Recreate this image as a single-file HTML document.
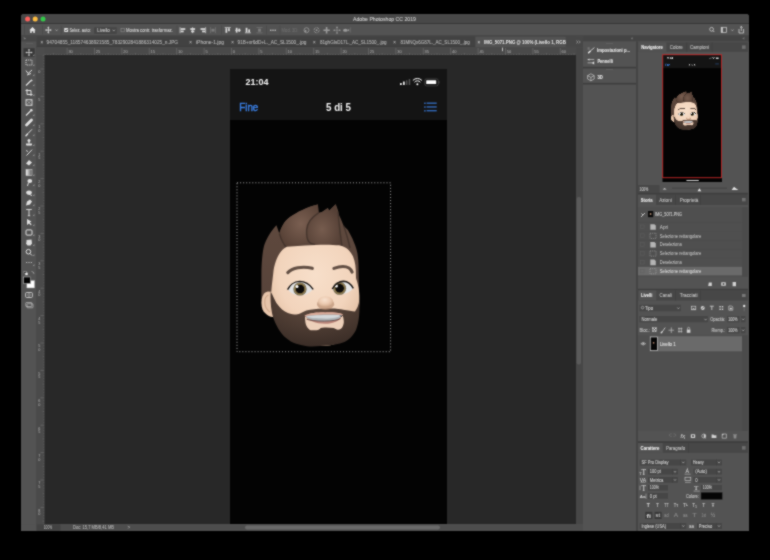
<!DOCTYPE html>
<html><head><meta charset="utf-8">
<style>
*{margin:0;padding:0}
html,body{width:770px;height:560px;background:#000;overflow:hidden}
svg{display:block;font-family:"Liberation Sans",sans-serif;will-change:transform}
</style></head><body>
<svg width="770" height="560" viewBox="0 0 770 560">
<defs><filter id="gblur" x="0" y="0" width="770" height="560" filterUnits="userSpaceOnUse" color-interpolation-filters="sRGB"><feConvolveMatrix order="3" kernelMatrix="1 2 1 2 10 2 1 2 1" divisor="22" edgeMode="duplicate"/></filter></defs>
<g filter="url(#gblur)">
<rect x="21.00" y="14.00" width="728.00" height="517.00" fill="#535353" rx="3"/>
<rect x="21.00" y="18.00" width="728.00" height="513.00" fill="#535353"/>
<path d="M21,23.5 L21,17 Q21,14 24,14 L746,14 Q749,14 749,17 L749,23.5 Z" fill="#484848"/>
<rect x="21.00" y="23.20" width="728.00" height="0.80" fill="#333"/>
<circle cx="27.6" cy="19" r="2.5" fill="#fc605c"/>
<circle cx="35.2" cy="19" r="2.5" fill="#fdbc40"/>
<circle cx="43" cy="19" r="2.5" fill="#34c84a"/>
<text x="353.00" y="20.90" font-size="5" fill="#d2d2d2" stroke="#d2d2d2" stroke-width="0.07" textLength="63.00" lengthAdjust="spacingAndGlyphs">Adobe Photoshop CC 2019</text>
<rect x="21.00" y="24.00" width="728.00" height="12.00" fill="#535353"/>
<rect x="21.00" y="35.60" width="728.00" height="0.60" fill="#3a3a3a"/>
<rect x="24.20" y="25.50" width="0.60" height="9.00" fill="#474747"/>
<rect x="42.40" y="25.50" width="0.60" height="9.00" fill="#474747"/>
<rect x="60.90" y="25.50" width="0.60" height="9.00" fill="#474747"/>
<rect x="176.70" y="25.50" width="0.60" height="9.00" fill="#474747"/>
<rect x="221.00" y="25.50" width="0.60" height="9.00" fill="#474747"/>
<rect x="266.00" y="25.50" width="0.60" height="9.00" fill="#474747"/>
<rect x="279.70" y="25.50" width="0.60" height="9.00" fill="#474747"/>
<path d="M29.3,30.2 L32.5,26.9 L35.7,30.2 L34.8,30.2 L34.8,33 L33.3,33 L33.3,31.3 L31.7,31.3 L31.7,33 L30.2,33 L30.2,30.2 Z" fill="#e6e6e6"/>
<g fill="#d8d8d8"><rect x="47.9" y="26.9" width="0.9" height="6.2"/><rect x="45.6" y="29.6" width="5.6" height="0.9"/><path d="M48.35,26.4 L47.2,27.8 L49.5,27.8Z M48.35,33.6 L47.2,32.2 L49.5,32.2Z M45.2,30.05 L46.5,28.9 L46.5,31.2Z M51.6,30.05 L50.3,28.9 L50.3,31.2Z"/></g>
<path d="M55.50,29.54 L56.60,30.86 L57.70,29.54" stroke="#c4c4c4" stroke-width="0.6" fill="none"/>
<rect x="64.20" y="27.90" width="4.00" height="4.00" fill="#e0e0e0" rx="0.5"/>
<path d="M65.1,30 L66.1,31 L67.5,28.9" stroke="#3a3a3a" stroke-width="0.7" fill="none"/>
<text x="69.40" y="31.80" font-size="5" fill="#d8d8d8" stroke="#d8d8d8" stroke-width="0.07" textLength="21.40" lengthAdjust="spacingAndGlyphs">Selez. auto:</text>
<rect x="94.00" y="27.20" width="22.80" height="6.80" fill="#464646" rx="0.8"/>
<text x="97.30" y="31.80" font-size="5" fill="#d0d0d0" stroke="#d0d0d0" stroke-width="0.07" textLength="12.50" lengthAdjust="spacingAndGlyphs">Livello</text>
<path d="M112.70,29.74 L113.80,31.06 L114.90,29.74" stroke="#c4c4c4" stroke-width="0.6" fill="none"/>
<rect x="121.00" y="28.40" width="3.40" height="3.40" fill="none" stroke="#8a8a8a" stroke-width="0.6"/>
<text x="126.00" y="31.80" font-size="5" fill="#d8d8d8" stroke="#d8d8d8" stroke-width="0.07" textLength="46.80" lengthAdjust="spacingAndGlyphs">Mostra contr. trasformaz.</text>
<g fill="#dcdcdc"><rect x="179.7" y="27.2" width="0.7" height="6"/><rect x="180.7" y="28.2" width="4.6" height="1.7"/><rect x="180.7" y="30.6" width="3" height="1.7"/></g>
<g fill="#dcdcdc"><rect x="192.35" y="27.2" width="0.7" height="6"/><rect x="190.29999999999998" y="28.2" width="4.8" height="1.7"/><rect x="191.1" y="30.6" width="3.2" height="1.7"/></g>
<g fill="#dcdcdc"><rect x="205.4" y="27.2" width="0.7" height="6"/><rect x="200.5" y="28.2" width="4.6" height="1.7"/><rect x="202.10000000000002" y="30.6" width="3" height="1.7"/></g>
<g fill="#7c7c7c"><rect x="210" y="27.2" width="0.6" height="6"/><rect x="215.4" y="27.2" width="0.6" height="6"/><rect x="211.5" y="28.8" width="3" height="2.8"/></g>
<g fill="#dcdcdc"><rect x="224.7" y="27.2" width="6" height="0.7"/><rect x="225.5" y="28.2" width="1.7" height="4.6"/><rect x="228.1" y="28.2" width="1.7" height="3"/></g>
<g fill="#dcdcdc"><rect x="235" y="29.85" width="6" height="0.7"/><rect x="235.8" y="27.8" width="1.7" height="4.8"/><rect x="238.4" y="28.6" width="1.7" height="3.2"/></g>
<g fill="#dcdcdc"><rect x="244.9" y="32.5" width="6" height="0.7"/><rect x="245.70000000000002" y="27.8" width="1.7" height="4.6"/><rect x="248.3" y="29.4" width="1.7" height="3"/></g>
<g fill="#7c7c7c"><rect x="256.5" y="27.2" width="6" height="0.6"/><rect x="256.5" y="32.6" width="6" height="0.6"/><rect x="258.1" y="28.7" width="2.8" height="3"/></g>
<circle cx="270.80" cy="30.2" r="0.7" fill="#d8d8d8"/>
<circle cx="273.00" cy="30.2" r="0.7" fill="#d8d8d8"/>
<circle cx="275.20" cy="30.2" r="0.7" fill="#d8d8d8"/>
<text x="281.60" y="31.80" font-size="5" fill="#6f6f6f" stroke="#6f6f6f" stroke-width="0.07" textLength="16.90" lengthAdjust="spacingAndGlyphs">Mod. 3D:</text>
<circle cx="306.5" cy="30.2" r="2.5" fill="none" stroke="#9a9a9a" stroke-width="0.8"/><circle cx="305.6" cy="30.9" r="1" fill="#9a9a9a"/>
<circle cx="316.6" cy="30.2" r="2.6" fill="none" stroke="#9a9a9a" stroke-width="0.8" stroke-dasharray="3 1"/><circle cx="316.6" cy="30.2" r="0.9" fill="#9a9a9a"/>
<path d="M326.6,27 L326.6,33.4 M323.4,30.2 L329.8,30.2" stroke="#9a9a9a" stroke-width="1.6"/>
<path d="M337,27 L337,33.4 M333.8,30.2 L340.2,30.2" stroke="#9a9a9a" stroke-width="0.6"/><g fill="#9a9a9a"><circle cx="337" cy="27.4" r="0.8"/><circle cx="337" cy="33" r="0.8"/><circle cx="334.2" cy="30.2" r="0.8"/><circle cx="339.8" cy="30.2" r="0.8"/></g>
<ellipse cx="345.4" cy="30.2" rx="2.4" ry="1.5" fill="#9a9a9a"/><path d="M347.5,30.2 L349.2,28.8 L349.2,31.6 Z" fill="#9a9a9a"/>
<rect x="350.00" y="27.50" width="0.50" height="5.00" fill="#777"/>
<circle cx="711.6" cy="29.3" r="1.9" fill="none" stroke="#d8d8d8" stroke-width="0.7"/><path d="M712.9,30.6 L714.3,32" stroke="#d8d8d8" stroke-width="0.8"/>
<rect x="721.20" y="27.30" width="5.20" height="5.20" fill="none" stroke="#d0d0d0" stroke-width="0.7"/>
<rect x="721.20" y="27.30" width="1.60" height="5.20" fill="#d0d0d0"/>
<path d="M731.30,29.54 L732.40,30.86 L733.50,29.54" stroke="#c4c4c4" stroke-width="0.6" fill="none"/>
<path d="M739,29 L739,33 L743.6,33 L743.6,29" stroke="#e0e0e0" stroke-width="0.7" fill="none"/><path d="M741.3,31 L741.3,26.4 M740,27.6 L741.3,26.4 L742.6,27.6" stroke="#e0e0e0" stroke-width="0.7" fill="none"/>
<rect x="21.00" y="36.20" width="15.60" height="488.00" fill="#535353"/>
<rect x="21.00" y="36.20" width="15.60" height="5.20" fill="#474747"/>
<rect x="36.00" y="36.20" width="0.70" height="488.00" fill="#484848"/>
<text x="23.40" y="40.40" font-size="4" fill="#9a9a9a" stroke="#9a9a9a" stroke-width="0.07">»</text>
<rect x="26.00" y="43.20" width="7.00" height="0.50" fill="#6a6a6a"/>
<rect x="23.50" y="48.20" width="11.20" height="8.60" fill="#393939"/>
<rect x="36.70" y="36.20" width="539.30" height="10.80" fill="#424242"/>
<rect x="36.70" y="46.70" width="539.30" height="0.60" fill="#363636"/>
<text x="40.40" y="43.60" font-size="4.5" fill="#a8a8a8" stroke="#a8a8a8" stroke-width="0.07">×</text>
<text x="46.60" y="43.80" font-size="4.6" fill="#b8b8b8" stroke="#b8b8b8" stroke-width="0.07" textLength="131.40" lengthAdjust="spacingAndGlyphs">94704855_118574638921585_7832902841886314025_n.JPG</text>
<text x="189.20" y="43.60" font-size="4.5" fill="#a8a8a8" stroke="#a8a8a8" stroke-width="0.07">×</text>
<text x="196.00" y="43.80" font-size="4.6" fill="#b8b8b8" stroke="#b8b8b8" stroke-width="0.07" textLength="28.00" lengthAdjust="spacingAndGlyphs">iPhone-1.jpg</text>
<text x="231.20" y="43.60" font-size="4.5" fill="#a8a8a8" stroke="#a8a8a8" stroke-width="0.07">×</text>
<text x="237.50" y="43.80" font-size="4.6" fill="#b8b8b8" stroke="#b8b8b8" stroke-width="0.07" textLength="69.00" lengthAdjust="spacingAndGlyphs">91B+xr6dD+L._AC_SL1500_.jpg</text>
<text x="312.90" y="43.60" font-size="4.5" fill="#a8a8a8" stroke="#a8a8a8" stroke-width="0.07">×</text>
<text x="320.00" y="43.80" font-size="4.6" fill="#b8b8b8" stroke="#b8b8b8" stroke-width="0.07" textLength="66.50" lengthAdjust="spacingAndGlyphs">81ghGIsD17L._AC_SL1500_.jpg</text>
<text x="393.20" y="43.60" font-size="4.5" fill="#a8a8a8" stroke="#a8a8a8" stroke-width="0.07">×</text>
<text x="400.50" y="43.80" font-size="4.6" fill="#b8b8b8" stroke="#b8b8b8" stroke-width="0.07" textLength="69.20" lengthAdjust="spacingAndGlyphs">81MNQx6G87L._AC_SL1500_.jpg</text>
<rect x="475.30" y="36.60" width="90.50" height="10.40" fill="#535353"/>
<text x="477.40" y="43.60" font-size="4.5" fill="#bdbdbd" stroke="#bdbdbd" stroke-width="0.07">×</text>
<svg x="475.3" y="36" width="90.5" height="11"><text x="8.7" y="7.8" font-size="4.7" fill="#e8e8e8" font-weight="bold" textLength="87" lengthAdjust="spacingAndGlyphs">IMG_5071.PNG @ 100% (Livello 1, RGB/8)</text></svg>
<rect x="566.00" y="36.20" width="17.00" height="10.80" fill="#474747"/>
<path d="M576.3,40.6 L578,42 L576.3,43.4 M578.6,40.6 L580.3,42 L578.6,43.4" stroke="#b0b0b0" stroke-width="0.6" fill="none"/>
<rect x="36.70" y="47.30" width="539.30" height="7.70" fill="#4a4a4a"/>
<rect x="36.70" y="47.30" width="7.80" height="476.70" fill="#4a4a4a"/>
<rect x="36.70" y="47.30" width="7.80" height="7.70" fill="#4c4c4c"/>
<rect x="502.20" y="47.60" width="0.80" height="3.60" fill="#e0e0e0"/>
<text x="68.40" y="52.60" font-size="4" fill="#b4b4b4">30</text>
<text x="95.80" y="52.60" font-size="4" fill="#b4b4b4">25</text>
<text x="123.20" y="52.60" font-size="4" fill="#b4b4b4">20</text>
<text x="150.60" y="52.60" font-size="4" fill="#b4b4b4">15</text>
<text x="178.00" y="52.60" font-size="4" fill="#b4b4b4">10</text>
<text x="205.40" y="52.60" font-size="4" fill="#b4b4b4">5</text>
<text x="232.80" y="52.60" font-size="4" fill="#b4b4b4">0</text>
<text x="260.20" y="52.60" font-size="4" fill="#b4b4b4">5</text>
<text x="287.60" y="52.60" font-size="4" fill="#b4b4b4">10</text>
<text x="315.00" y="52.60" font-size="4" fill="#b4b4b4">15</text>
<text x="342.40" y="52.60" font-size="4" fill="#b4b4b4">20</text>
<text x="369.80" y="52.60" font-size="4" fill="#b4b4b4">25</text>
<text x="397.20" y="52.60" font-size="4" fill="#b4b4b4">30</text>
<text x="424.60" y="52.60" font-size="4" fill="#b4b4b4">35</text>
<text x="452.00" y="52.60" font-size="4" fill="#b4b4b4">40</text>
<text x="479.40" y="52.60" font-size="4" fill="#b4b4b4">45</text>
<text x="506.80" y="52.60" font-size="4" fill="#b4b4b4">50</text>
<text x="534.20" y="52.60" font-size="4" fill="#b4b4b4">55</text>
<text x="561.60" y="52.60" font-size="4" fill="#b4b4b4">60</text>
<path d="M45.18,53.90 L45.18,55 M47.92,53.90 L47.92,55 M50.66,53.90 L50.66,55 M53.40,53.20 L53.40,55 M56.14,53.90 L56.14,55 M58.88,53.90 L58.88,55 M61.62,53.90 L61.62,55 M64.36,53.90 L64.36,55 M67.10,48 L67.10,55 M69.84,53.90 L69.84,55 M72.58,53.90 L72.58,55 M75.32,53.90 L75.32,55 M78.06,53.90 L78.06,55 M80.80,53.20 L80.80,55 M83.54,53.90 L83.54,55 M86.28,53.90 L86.28,55 M89.02,53.90 L89.02,55 M91.76,53.90 L91.76,55 M94.50,48 L94.50,55 M97.24,53.90 L97.24,55 M99.98,53.90 L99.98,55 M102.72,53.90 L102.72,55 M105.46,53.90 L105.46,55 M108.20,53.20 L108.20,55 M110.94,53.90 L110.94,55 M113.68,53.90 L113.68,55 M116.42,53.90 L116.42,55 M119.16,53.90 L119.16,55 M121.90,48 L121.90,55 M124.64,53.90 L124.64,55 M127.38,53.90 L127.38,55 M130.12,53.90 L130.12,55 M132.86,53.90 L132.86,55 M135.60,53.20 L135.60,55 M138.34,53.90 L138.34,55 M141.08,53.90 L141.08,55 M143.82,53.90 L143.82,55 M146.56,53.90 L146.56,55 M149.30,48 L149.30,55 M152.04,53.90 L152.04,55 M154.78,53.90 L154.78,55 M157.52,53.90 L157.52,55 M160.26,53.90 L160.26,55 M163.00,53.20 L163.00,55 M165.74,53.90 L165.74,55 M168.48,53.90 L168.48,55 M171.22,53.90 L171.22,55 M173.96,53.90 L173.96,55 M176.70,48 L176.70,55 M179.44,53.90 L179.44,55 M182.18,53.90 L182.18,55 M184.92,53.90 L184.92,55 M187.66,53.90 L187.66,55 M190.40,53.20 L190.40,55 M193.14,53.90 L193.14,55 M195.88,53.90 L195.88,55 M198.62,53.90 L198.62,55 M201.36,53.90 L201.36,55 M204.10,48 L204.10,55 M206.84,53.90 L206.84,55 M209.58,53.90 L209.58,55 M212.32,53.90 L212.32,55 M215.06,53.90 L215.06,55 M217.80,53.20 L217.80,55 M220.54,53.90 L220.54,55 M223.28,53.90 L223.28,55 M226.02,53.90 L226.02,55 M228.76,53.90 L228.76,55 M231.50,48 L231.50,55 M234.24,53.90 L234.24,55 M236.98,53.90 L236.98,55 M239.72,53.90 L239.72,55 M242.46,53.90 L242.46,55 M245.20,53.20 L245.20,55 M247.94,53.90 L247.94,55 M250.68,53.90 L250.68,55 M253.42,53.90 L253.42,55 M256.16,53.90 L256.16,55 M258.90,48 L258.90,55 M261.64,53.90 L261.64,55 M264.38,53.90 L264.38,55 M267.12,53.90 L267.12,55 M269.86,53.90 L269.86,55 M272.60,53.20 L272.60,55 M275.34,53.90 L275.34,55 M278.08,53.90 L278.08,55 M280.82,53.90 L280.82,55 M283.56,53.90 L283.56,55 M286.30,48 L286.30,55 M289.04,53.90 L289.04,55 M291.78,53.90 L291.78,55 M294.52,53.90 L294.52,55 M297.26,53.90 L297.26,55 M300.00,53.20 L300.00,55 M302.74,53.90 L302.74,55 M305.48,53.90 L305.48,55 M308.22,53.90 L308.22,55 M310.96,53.90 L310.96,55 M313.70,48 L313.70,55 M316.44,53.90 L316.44,55 M319.18,53.90 L319.18,55 M321.92,53.90 L321.92,55 M324.66,53.90 L324.66,55 M327.40,53.20 L327.40,55 M330.14,53.90 L330.14,55 M332.88,53.90 L332.88,55 M335.62,53.90 L335.62,55 M338.36,53.90 L338.36,55 M341.10,48 L341.10,55 M343.84,53.90 L343.84,55 M346.58,53.90 L346.58,55 M349.32,53.90 L349.32,55 M352.06,53.90 L352.06,55 M354.80,53.20 L354.80,55 M357.54,53.90 L357.54,55 M360.28,53.90 L360.28,55 M363.02,53.90 L363.02,55 M365.76,53.90 L365.76,55 M368.50,48 L368.50,55 M371.24,53.90 L371.24,55 M373.98,53.90 L373.98,55 M376.72,53.90 L376.72,55 M379.46,53.90 L379.46,55 M382.20,53.20 L382.20,55 M384.94,53.90 L384.94,55 M387.68,53.90 L387.68,55 M390.42,53.90 L390.42,55 M393.16,53.90 L393.16,55 M395.90,48 L395.90,55 M398.64,53.90 L398.64,55 M401.38,53.90 L401.38,55 M404.12,53.90 L404.12,55 M406.86,53.90 L406.86,55 M409.60,53.20 L409.60,55 M412.34,53.90 L412.34,55 M415.08,53.90 L415.08,55 M417.82,53.90 L417.82,55 M420.56,53.90 L420.56,55 M423.30,48 L423.30,55 M426.04,53.90 L426.04,55 M428.78,53.90 L428.78,55 M431.52,53.90 L431.52,55 M434.26,53.90 L434.26,55 M437.00,53.20 L437.00,55 M439.74,53.90 L439.74,55 M442.48,53.90 L442.48,55 M445.22,53.90 L445.22,55 M447.96,53.90 L447.96,55 M450.70,48 L450.70,55 M453.44,53.90 L453.44,55 M456.18,53.90 L456.18,55 M458.92,53.90 L458.92,55 M461.66,53.90 L461.66,55 M464.40,53.20 L464.40,55 M467.14,53.90 L467.14,55 M469.88,53.90 L469.88,55 M472.62,53.90 L472.62,55 M475.36,53.90 L475.36,55 M478.10,48 L478.10,55 M480.84,53.90 L480.84,55 M483.58,53.90 L483.58,55 M486.32,53.90 L486.32,55 M489.06,53.90 L489.06,55 M491.80,53.20 L491.80,55 M494.54,53.90 L494.54,55 M497.28,53.90 L497.28,55 M500.02,53.90 L500.02,55 M502.76,53.90 L502.76,55 M505.50,48 L505.50,55 M508.24,53.90 L508.24,55 M510.98,53.90 L510.98,55 M513.72,53.90 L513.72,55 M516.46,53.90 L516.46,55 M519.20,53.20 L519.20,55 M521.94,53.90 L521.94,55 M524.68,53.90 L524.68,55 M527.42,53.90 L527.42,55 M530.16,53.90 L530.16,55 M532.90,48 L532.90,55 M535.64,53.90 L535.64,55 M538.38,53.90 L538.38,55 M541.12,53.90 L541.12,55 M543.86,53.90 L543.86,55 M546.60,53.20 L546.60,55 M549.34,53.90 L549.34,55 M552.08,53.90 L552.08,55 M554.82,53.90 L554.82,55 M557.56,53.90 L557.56,55 M560.30,48 L560.30,55 M563.04,53.90 L563.04,55 M565.78,53.90 L565.78,55 M568.52,53.90 L568.52,55 M571.26,53.90 L571.26,55 M574.00,53.20 L574.00,55" stroke="#7a7a7a" stroke-width="0.5"/>
<text x="38.20" y="73.40" font-size="3.8" fill="#b4b4b4">0</text>
<text x="38.20" y="100.80" font-size="3.8" fill="#b4b4b4">5</text>
<text x="38.20" y="128.20" font-size="3.8" fill="#b4b4b4">1</text>
<text x="38.20" y="131.80" font-size="3.8" fill="#b4b4b4">0</text>
<text x="38.20" y="155.60" font-size="3.8" fill="#b4b4b4">1</text>
<text x="38.20" y="159.20" font-size="3.8" fill="#b4b4b4">5</text>
<text x="38.20" y="183.00" font-size="3.8" fill="#b4b4b4">2</text>
<text x="38.20" y="186.60" font-size="3.8" fill="#b4b4b4">0</text>
<text x="38.20" y="210.40" font-size="3.8" fill="#b4b4b4">2</text>
<text x="38.20" y="214.00" font-size="3.8" fill="#b4b4b4">5</text>
<text x="38.20" y="237.80" font-size="3.8" fill="#b4b4b4">3</text>
<text x="38.20" y="241.40" font-size="3.8" fill="#b4b4b4">0</text>
<text x="38.20" y="265.20" font-size="3.8" fill="#b4b4b4">3</text>
<text x="38.20" y="268.80" font-size="3.8" fill="#b4b4b4">5</text>
<text x="38.20" y="292.60" font-size="3.8" fill="#b4b4b4">4</text>
<text x="38.20" y="296.20" font-size="3.8" fill="#b4b4b4">0</text>
<text x="38.20" y="320.00" font-size="3.8" fill="#b4b4b4">4</text>
<text x="38.20" y="323.60" font-size="3.8" fill="#b4b4b4">5</text>
<text x="38.20" y="347.40" font-size="3.8" fill="#b4b4b4">5</text>
<text x="38.20" y="351.00" font-size="3.8" fill="#b4b4b4">0</text>
<text x="38.20" y="374.80" font-size="3.8" fill="#b4b4b4">5</text>
<text x="38.20" y="378.40" font-size="3.8" fill="#b4b4b4">5</text>
<text x="38.20" y="402.20" font-size="3.8" fill="#b4b4b4">6</text>
<text x="38.20" y="405.80" font-size="3.8" fill="#b4b4b4">0</text>
<text x="38.20" y="429.60" font-size="3.8" fill="#b4b4b4">6</text>
<text x="38.20" y="433.20" font-size="3.8" fill="#b4b4b4">5</text>
<text x="38.20" y="457.00" font-size="3.8" fill="#b4b4b4">7</text>
<text x="38.20" y="460.60" font-size="3.8" fill="#b4b4b4">0</text>
<text x="38.20" y="484.40" font-size="3.8" fill="#b4b4b4">7</text>
<text x="38.20" y="488.00" font-size="3.8" fill="#b4b4b4">5</text>
<text x="38.20" y="511.80" font-size="3.8" fill="#b4b4b4">8</text>
<text x="38.20" y="515.40" font-size="3.8" fill="#b4b4b4">0</text>
<path d="M42.70,55.30 L44.5,55.30 M43.40,58.04 L44.5,58.04 M43.40,60.78 L44.5,60.78 M43.40,63.52 L44.5,63.52 M43.40,66.26 L44.5,66.26 M40.5,69.00 L44.5,69.00 M43.40,71.74 L44.5,71.74 M43.40,74.48 L44.5,74.48 M43.40,77.22 L44.5,77.22 M43.40,79.96 L44.5,79.96 M42.70,82.70 L44.5,82.70 M43.40,85.44 L44.5,85.44 M43.40,88.18 L44.5,88.18 M43.40,90.92 L44.5,90.92 M43.40,93.66 L44.5,93.66 M40.5,96.40 L44.5,96.40 M43.40,99.14 L44.5,99.14 M43.40,101.88 L44.5,101.88 M43.40,104.62 L44.5,104.62 M43.40,107.36 L44.5,107.36 M42.70,110.10 L44.5,110.10 M43.40,112.84 L44.5,112.84 M43.40,115.58 L44.5,115.58 M43.40,118.32 L44.5,118.32 M43.40,121.06 L44.5,121.06 M40.5,123.80 L44.5,123.80 M43.40,126.54 L44.5,126.54 M43.40,129.28 L44.5,129.28 M43.40,132.02 L44.5,132.02 M43.40,134.76 L44.5,134.76 M42.70,137.50 L44.5,137.50 M43.40,140.24 L44.5,140.24 M43.40,142.98 L44.5,142.98 M43.40,145.72 L44.5,145.72 M43.40,148.46 L44.5,148.46 M40.5,151.20 L44.5,151.20 M43.40,153.94 L44.5,153.94 M43.40,156.68 L44.5,156.68 M43.40,159.42 L44.5,159.42 M43.40,162.16 L44.5,162.16 M42.70,164.90 L44.5,164.90 M43.40,167.64 L44.5,167.64 M43.40,170.38 L44.5,170.38 M43.40,173.12 L44.5,173.12 M43.40,175.86 L44.5,175.86 M40.5,178.60 L44.5,178.60 M43.40,181.34 L44.5,181.34 M43.40,184.08 L44.5,184.08 M43.40,186.82 L44.5,186.82 M43.40,189.56 L44.5,189.56 M42.70,192.30 L44.5,192.30 M43.40,195.04 L44.5,195.04 M43.40,197.78 L44.5,197.78 M43.40,200.52 L44.5,200.52 M43.40,203.26 L44.5,203.26 M40.5,206.00 L44.5,206.00 M43.40,208.74 L44.5,208.74 M43.40,211.48 L44.5,211.48 M43.40,214.22 L44.5,214.22 M43.40,216.96 L44.5,216.96 M42.70,219.70 L44.5,219.70 M43.40,222.44 L44.5,222.44 M43.40,225.18 L44.5,225.18 M43.40,227.92 L44.5,227.92 M43.40,230.66 L44.5,230.66 M40.5,233.40 L44.5,233.40 M43.40,236.14 L44.5,236.14 M43.40,238.88 L44.5,238.88 M43.40,241.62 L44.5,241.62 M43.40,244.36 L44.5,244.36 M42.70,247.10 L44.5,247.10 M43.40,249.84 L44.5,249.84 M43.40,252.58 L44.5,252.58 M43.40,255.32 L44.5,255.32 M43.40,258.06 L44.5,258.06 M40.5,260.80 L44.5,260.80 M43.40,263.54 L44.5,263.54 M43.40,266.28 L44.5,266.28 M43.40,269.02 L44.5,269.02 M43.40,271.76 L44.5,271.76 M42.70,274.50 L44.5,274.50 M43.40,277.24 L44.5,277.24 M43.40,279.98 L44.5,279.98 M43.40,282.72 L44.5,282.72 M43.40,285.46 L44.5,285.46 M40.5,288.20 L44.5,288.20 M43.40,290.94 L44.5,290.94 M43.40,293.68 L44.5,293.68 M43.40,296.42 L44.5,296.42 M43.40,299.16 L44.5,299.16 M42.70,301.90 L44.5,301.90 M43.40,304.64 L44.5,304.64 M43.40,307.38 L44.5,307.38 M43.40,310.12 L44.5,310.12 M43.40,312.86 L44.5,312.86 M40.5,315.60 L44.5,315.60 M43.40,318.34 L44.5,318.34 M43.40,321.08 L44.5,321.08 M43.40,323.82 L44.5,323.82 M43.40,326.56 L44.5,326.56 M42.70,329.30 L44.5,329.30 M43.40,332.04 L44.5,332.04 M43.40,334.78 L44.5,334.78 M43.40,337.52 L44.5,337.52 M43.40,340.26 L44.5,340.26 M40.5,343.00 L44.5,343.00 M43.40,345.74 L44.5,345.74 M43.40,348.48 L44.5,348.48 M43.40,351.22 L44.5,351.22 M43.40,353.96 L44.5,353.96 M42.70,356.70 L44.5,356.70 M43.40,359.44 L44.5,359.44 M43.40,362.18 L44.5,362.18 M43.40,364.92 L44.5,364.92 M43.40,367.66 L44.5,367.66 M40.5,370.40 L44.5,370.40 M43.40,373.14 L44.5,373.14 M43.40,375.88 L44.5,375.88 M43.40,378.62 L44.5,378.62 M43.40,381.36 L44.5,381.36 M42.70,384.10 L44.5,384.10 M43.40,386.84 L44.5,386.84 M43.40,389.58 L44.5,389.58 M43.40,392.32 L44.5,392.32 M43.40,395.06 L44.5,395.06 M40.5,397.80 L44.5,397.80 M43.40,400.54 L44.5,400.54 M43.40,403.28 L44.5,403.28 M43.40,406.02 L44.5,406.02 M43.40,408.76 L44.5,408.76 M42.70,411.50 L44.5,411.50 M43.40,414.24 L44.5,414.24 M43.40,416.98 L44.5,416.98 M43.40,419.72 L44.5,419.72 M43.40,422.46 L44.5,422.46 M40.5,425.20 L44.5,425.20 M43.40,427.94 L44.5,427.94 M43.40,430.68 L44.5,430.68 M43.40,433.42 L44.5,433.42 M43.40,436.16 L44.5,436.16 M42.70,438.90 L44.5,438.90 M43.40,441.64 L44.5,441.64 M43.40,444.38 L44.5,444.38 M43.40,447.12 L44.5,447.12 M43.40,449.86 L44.5,449.86 M40.5,452.60 L44.5,452.60 M43.40,455.34 L44.5,455.34 M43.40,458.08 L44.5,458.08 M43.40,460.82 L44.5,460.82 M43.40,463.56 L44.5,463.56 M42.70,466.30 L44.5,466.30 M43.40,469.04 L44.5,469.04 M43.40,471.78 L44.5,471.78 M43.40,474.52 L44.5,474.52 M43.40,477.26 L44.5,477.26 M40.5,480.00 L44.5,480.00 M43.40,482.74 L44.5,482.74 M43.40,485.48 L44.5,485.48 M43.40,488.22 L44.5,488.22 M43.40,490.96 L44.5,490.96 M42.70,493.70 L44.5,493.70 M43.40,496.44 L44.5,496.44 M43.40,499.18 L44.5,499.18 M43.40,501.92 L44.5,501.92 M43.40,504.66 L44.5,504.66 M40.5,507.40 L44.5,507.40 M43.40,510.14 L44.5,510.14 M43.40,512.88 L44.5,512.88 M43.40,515.62 L44.5,515.62 M43.40,518.36 L44.5,518.36 M42.70,521.10 L44.5,521.10 M43.40,523.84 L44.5,523.84" stroke="#7a7a7a" stroke-width="0.5"/>
<rect x="44.50" y="55.00" width="531.50" height="469.00" fill="#282828"/>
<rect x="576.00" y="47.30" width="7.00" height="476.70" fill="#474747"/>
<rect x="576.60" y="197.00" width="4.40" height="167.50" fill="#5a5a5a" rx="2"/>
<rect x="36.60" y="524.00" width="546.40" height="7.00" fill="#4d4d4d"/>
<rect x="36.50" y="524.30" width="24.00" height="6.50" fill="#424242"/>
<text x="43.80" y="529.30" font-size="4.6" fill="#c0c0c0" textLength="8.40" lengthAdjust="spacingAndGlyphs">100%</text>
<text x="73.00" y="529.30" font-size="4.6" fill="#c0c0c0" textLength="41.00" lengthAdjust="spacingAndGlyphs">Doc: 15,7 MB/8,41 MB</text>
<text x="127.60" y="529.40" font-size="4.6" fill="#c0c0c0">></text>
<rect x="245.00" y="525.50" width="195.00" height="4.00" fill="#6a6a6a" rx="2"/>
<rect x="583.00" y="36.20" width="166.00" height="5.30" fill="#444444"/>
<text x="631.00" y="40.30" font-size="4" fill="#8a8a8a" stroke="#8a8a8a" stroke-width="0.07">«</text>
<text x="742.40" y="40.30" font-size="4" fill="#8a8a8a" stroke="#8a8a8a" stroke-width="0.07">«</text>
<rect x="583.00" y="41.50" width="53.00" height="489.50" fill="#535353"/>
<rect x="636.00" y="41.50" width="2.00" height="489.50" fill="#444444"/>
<rect x="638.00" y="41.50" width="110.00" height="489.50" fill="#535353"/>
<defs>
<radialGradient id="skin" cx="0.5" cy="0.3" r="0.75">
<stop offset="0" stop-color="#f7dfca"/><stop offset="0.55" stop-color="#f2d4bc"/><stop offset="1" stop-color="#dbb596"/>
</radialGradient>
<linearGradient id="hairg" x1="0" y1="0" x2="0" y2="1">
<stop offset="0" stop-color="#604a3e"/><stop offset="1" stop-color="#57433a"/>
</linearGradient>
<radialGradient id="lock1" cx="0.55" cy="0.45" r="0.6">
<stop offset="0" stop-color="#7a5f51"/><stop offset="1" stop-color="#574136"/>
</radialGradient>
<radialGradient id="lock2" cx="0.45" cy="0.6" r="0.6">
<stop offset="0" stop-color="#765c4e"/><stop offset="1" stop-color="#543f35"/>
</radialGradient>
<radialGradient id="beardg" cx="0.5" cy="0.2" r="0.85">
<stop offset="0" stop-color="#614d42"/><stop offset="0.55" stop-color="#4c3b32"/><stop offset="1" stop-color="#382b25"/>
</radialGradient>
<radialGradient id="noseg" cx="0.45" cy="0.35" r="0.65">
<stop offset="0" stop-color="#f8e2cf"/><stop offset="0.55" stop-color="#eccbb2"/><stop offset="0.85" stop-color="#d9b498"/><stop offset="1" stop-color="#c9a184"/>
</radialGradient>
<radialGradient id="irisg" cx="0.5" cy="0.5" r="0.5">
<stop offset="0.6" stop-color="#0c0b0a"/><stop offset="0.68" stop-color="#6e5c36"/><stop offset="0.86" stop-color="#928157"/><stop offset="1" stop-color="#5f5c4e"/>
</radialGradient>
<g id="memoji">
<path d="M261.4,300 L261.4,275 C261.5,262 262.5,252 264,246 C266,239 271,231 276.4,225.2 C277.5,228 278.5,231 279.3,233.5 C281,228 284,221 290,217 C297,212 307,207 317.9,204.4 L318.6,212.9 L322,212 L327.9,207.9 L329,210.7 L335.7,204.3 C337,207 338.5,212 339.3,215.7 C341,219 342.5,223 343.6,225.7 L347.9,230 C350,234 352.5,238 353.6,241.4 C356,247 357.6,252 357.9,257 C358.5,262 358.6,266 358.6,270 L359.3,300 Z" fill="url(#hairg)"/>
<path d="M279.3,233.5 C281,228 284,221 290,217 C297,212 307,207 317.9,204.4 L318.6,212.9 C312,217 307,222 306.6,230 C306.3,236 307.5,240.5 309.3,242.3 L286.5,247.5 C283,244 281,239 279.3,233.5 Z" fill="url(#lock1)"/>
<path d="M309.3,242.3 C307.5,240.5 306.3,236 306.6,230 C307,222 312,217 318.6,212.9 L322,212 L327.9,207.9 L329,210.7 L335.7,204.3 C337,209 338.5,220 339.5,228 C340,234 340.5,240 341,246 L314,245 Z" fill="url(#lock2)"/>
<filter id="soft" x="-20%" y="-20%" width="140%" height="140%"><feGaussianBlur stdDeviation="0.7"/></filter>
<g stroke="#3a2d27" fill="none" stroke-width="1.4" opacity="0.7" filter="url(#soft)">
<path d="M279.3,233.5 C281,239 283,244 286.5,247.5"/>
<path d="M318.6,212.9 C312,217 307,222 306.6,230 C306.3,236 307.5,240.5 309.3,242.3 C311,243.8 313,244.4 315,244.6"/>
<path d="M337.9,211.4 C339,222 340,233 342,246"/>
<path d="M343.6,225.7 C346,232 348,239 350,248"/>
</g>
<path d="M267.9,291.4 C264,292 261.5,296 261.4,302.9 C261.5,308 263,311 265,313 C268,316 271,317.5 273.6,317 L274.5,292 Z" fill="#e6c4aa"/>
<path d="M268.5,295 C266,296 264.5,299 264.8,303 C265,307 267,310 270,312" stroke="#cfa98d" stroke-width="1.2" fill="none"/>
<path d="M273.6,270 C275,262 278,255 281,251.5 C283,249 285,247.5 287,246.8 L305,245.5 C320,244.3 332,244.5 339,245.3 C344,246.5 348,248.5 351,253 C354,257 355.5,263 355.8,270 L356,278 C357.5,283 359.3,288 359.3,296 C359.5,305 359,315 356,325 C352,336 340,345 325,346 C308,347 290,340 280,328 C273,318 270.5,302 271.4,290 C272,283 273,276 273.6,270 Z" fill="url(#skin)"/>
<path d="M270.7,291.4 C273,296 275,300 276.4,302.9 C280,308 284,311.5 287.9,312.9 C292,314.3 296,314.6 297.9,314.3 C301,313.5 303,311.5 306.4,310.5 C312,309 320,308.5 325.5,308.8 C333,308.2 340,309 343.2,309.8 C348,310.6 353,311.5 355,311.4 C357,309 358.8,305 359.3,300 C359.8,310 359.5,321 356,330 C352,338 346,342 340,343.5 C333,345 327,345.6 320,346 C314,346.6 308,346.8 302,345.2 C294,344 287,340 282,334 C276.4,327 273,318 272,313 C270.5,305 270.3,297 270.7,291.4 Z" fill="url(#beardg)"/>
<path d="M305,316.8 C305,321 305.5,325 306.8,326.4 C308,328.5 309.5,330 311,330.2 L316.4,330.2 C318.5,330 320,329 320.7,328 C322,327.5 324,327.3 326,327.5 C329,327.6 331.5,327.8 333.6,328 C335,328.7 336.5,329.6 337.9,329.7 C340,329.7 341.5,328.5 342.2,327.5 C343.5,325 344,323 343.8,321 C343.6,318 343,316 342.2,314.7 Z" fill="#edd0ba"/>
<path d="M304.6,315.6 C310,312.8 320,312.2 325,312.4 C332,312.2 339,312.6 342.8,314.2 C341,320.8 333,323.8 325,323.8 C316,323.8 308,320.8 304.6,315.6 Z" fill="#b98479"/>
<path d="M304.6,315.6 C310,312.8 320,312.2 325,312.4 C332,312.2 339,312.6 342.8,314.2 L342.2,315.2 C335,314.2 315,314.4 305.6,316.4 Z" fill="#d9ab99"/>
<path d="M305.6,316.4 C315,314.4 335,314.2 342.2,315.2 C340.5,319 335,321.2 325,321.4 C315,321.4 308.5,319.6 305.6,316.4 Z" fill="#aeb3b6"/>
<path d="M306.4,316.6 C315,315 335,314.8 341.4,315.5 C338,317.6 333,318.4 325,318.5 C316,318.5 310,317.8 306.4,316.6 Z" fill="#d3d7d9"/>
<path d="M306.5,319.2 C313,321.8 336,321.8 340.5,318.6" stroke="#4a2f2c" stroke-width="0.7" fill="none"/>
<path d="M340.2,315.6 C341,316.5 341.6,317.2 342.4,315" stroke="#2a1c1a" stroke-width="1" fill="none"/>
<ellipse cx="325.6" cy="304.2" rx="8.6" ry="5.8" fill="#b08468" opacity="0.6" filter="url(#soft)"/><ellipse cx="325.5" cy="301.6" rx="7.6" ry="5.4" fill="url(#noseg)"/>
<path d="M287.8,272.6 C292,268 302,265.8 312.3,268.3" stroke="#635045" stroke-width="3.1" fill="none" stroke-linecap="round"/>
<path d="M333.9,268.4 C340,266.2 346,266.3 349,268 C350.5,269 351.5,270.5 352.1,272.1" stroke="#635045" stroke-width="3.1" fill="none" stroke-linecap="round"/>
<path d="M288,289.5 C289.5,285.5 294,282 299.5,281.8 C304.5,281.8 309,284 312.8,289.2 C310,293 305,295.3 299.5,295.3 C294,295.3 290,292.5 288,289.5 Z" fill="#e2e2e2"/>
<circle cx="300" cy="289" r="6.6" fill="url(#irisg)"/>
<circle cx="297" cy="286.6" r="1.5" fill="#fff"/>
<path d="M287.6,289.6 C289.5,285.5 294,281.6 299.5,281.4 C305,281.4 309.5,284 313.2,289.3" stroke="#1b1715" stroke-width="1.4" fill="none"/>
<path d="M332.6,289.5 C334.5,285.5 338.5,281.8 343.5,281.6 C348,281.6 351,284.5 353,288.4 C350,292 346.5,293.6 342,293.8 C337.5,293.8 334.5,292 332.6,289.5 Z" fill="#e6e6e6"/>
<circle cx="339.6" cy="288.3" r="6.5" fill="url(#irisg)"/>
<circle cx="336.4" cy="286" r="1.5" fill="#fff"/>
<path d="M332.2,289 C334.5,285 338,281.4 343.5,281.2 C348,281.2 351,284 353.3,288.4" stroke="#1b1715" stroke-width="1.4" fill="none"/>
</g>
<clipPath id="canvclip"><rect x="44.5" y="55" width="531.5" height="469"/></clipPath><clipPath id="navclip"><rect x="662.5" y="54.5" width="59" height="127.5"/></clipPath></defs>
<g clip-path="url(#canvclip)">
<rect x="230.00" y="69.00" width="217.00" height="470.00" fill="#030303"/>
<rect x="230.00" y="69.00" width="217.00" height="51.00" fill="#141414"/>
<text x="245.60" y="85.10" font-size="9.2" fill="#f4f4f4" textLength="23.00" lengthAdjust="spacingAndGlyphs" font-weight="bold">21:04</text>
<g fill="#fff"><rect x="400" y="83.1" width="1.7" height="1.9" rx="0.3"/><rect x="403.1" y="81.5" width="1.6" height="3.5" rx="0.3"/></g>
<g fill="#555"><rect x="406" y="80.2" width="1.4" height="4.8" rx="0.3"/><rect x="408.7" y="78.9" width="1.5" height="6.1" rx="0.3"/></g>
<g fill="none" stroke="#fff" stroke-width="1"><path d="M412.9,80.4 A6.2,6.2 0 0 1 421.9,80.4"/><path d="M414.5,82.2 A3.8,3.8 0 0 1 420.3,82.2"/></g><circle cx="417.4" cy="84.2" r="1" fill="#fff"/>
<rect x="424.7" y="78.8" width="13.6" height="7" rx="1.8" fill="none" stroke="#555" stroke-width="0.6"/><rect x="426.2" y="80.2" width="10" height="3.9" rx="0.6" fill="#fff"/><rect x="438.6" y="81.3" width="0.8" height="2" fill="#555"/>
<text x="239.30" y="110.80" font-size="10.5" fill="#3a7fe4" stroke="#3a7fe4" stroke-width="0.45" textLength="19.00" lengthAdjust="spacingAndGlyphs">Fine</text>
<text x="326.00" y="111.20" font-size="10" fill="#f0f0f0" textLength="25.00" lengthAdjust="spacingAndGlyphs" font-weight="bold">5 di 5</text>
<g fill="#3a7fe4"><rect x="424.2" y="102.6" width="1.4" height="1.3"/><rect x="426.6" y="102.6" width="10.1" height="1.1"/><rect x="424.2" y="106.4" width="1.4" height="1.3"/><rect x="426.6" y="106.4" width="10.1" height="1.1"/><rect x="424.2" y="110.2" width="1.4" height="1.3"/><rect x="426.6" y="110.2" width="10.1" height="1.1"/></g>
<use href="#memoji"/>
<rect x="318.00" y="532.00" width="45.00" height="2.00" fill="#dcdcdc" rx="1"/>
</g>
<rect x="237" y="182.8" width="153.6" height="168.9" fill="none" stroke="#a8a8a8" stroke-width="0.9" stroke-dasharray="1.1 1.95"/>
<rect x="606.00" y="43.10" width="7.00" height="0.50" fill="#6e6e6e"/>
<rect x="583.00" y="66.80" width="53.00" height="1.60" fill="#3e3e3e"/>
<rect x="606.00" y="69.30" width="7.00" height="0.50" fill="#6e6e6e"/>
<rect x="583.00" y="82.90" width="53.00" height="1.60" fill="#3e3e3e"/>
<path d="M588.6,52.8 L590.2,51.2" stroke="#e6e6e6" stroke-width="1.5" stroke-linecap="round"/><path d="M590.4,50.9 L594.4,47.6" stroke="#e0e0e0" stroke-width="0.8"/><rect x="587.8" y="47.2" width="0.5" height="2.6" fill="#9a9a9a"/><rect x="588.8" y="47.2" width="0.5" height="2.6" fill="#9a9a9a"/>
<text x="597.00" y="52.40" font-size="5" fill="#e6e6e6" stroke="#e6e6e6" stroke-width="0.07" textLength="33.00" lengthAdjust="spacingAndGlyphs" font-weight="bold">Impostazioni p...</text>
<g fill="#dcdcdc"><rect x="587.6" y="59.3" width="6.6" height="0.6"/><path d="M587.6,59.6 L589.4,58.4 L589.4,60.8 Z"/><rect x="587.6" y="62.6" width="4.4" height="0.6"/><path d="M591.6,62.9 L594.2,61.3 L594.2,64.5 Z"/></g>
<text x="597.40" y="63.00" font-size="5" fill="#e6e6e6" stroke="#e6e6e6" stroke-width="0.07" textLength="15.50" lengthAdjust="spacingAndGlyphs" font-weight="bold">Pennelli</text>
<path d="M590.9,73.8 L594.2,75.6 L594.2,79 L590.9,80.8 L587.6,79 L587.6,75.6 Z M587.6,75.6 L590.9,77.4 L594.2,75.6 M590.9,77.4 L590.9,80.8" stroke="#dcdcdc" stroke-width="0.6" fill="none"/>
<text x="597.40" y="78.80" font-size="5" fill="#e6e6e6" stroke="#e6e6e6" stroke-width="0.07" textLength="5.40" lengthAdjust="spacingAndGlyphs" font-weight="bold">3D</text>
<rect x="638.00" y="42.20" width="110.00" height="9.70" fill="#474747"/>
<rect x="638.20" y="42.20" width="28.20" height="9.70" fill="#535353"/>
<text x="641.20" y="48.75" font-size="5" fill="#f0f0f0" stroke="#f0f0f0" stroke-width="0.07" textLength="21.50" lengthAdjust="spacingAndGlyphs" font-weight="bold">Navigatore</text>
<rect x="686.60" y="42.20" width="0.50" height="9.70" fill="#3c3c3c"/>
<text x="669.80" y="48.75" font-size="5" fill="#c4c4c4" stroke="#c4c4c4" stroke-width="0.07" textLength="12.90" lengthAdjust="spacingAndGlyphs">Colore</text>
<rect x="711.80" y="42.20" width="0.50" height="9.70" fill="#3c3c3c"/>
<text x="690.00" y="48.75" font-size="5" fill="#c4c4c4" stroke="#c4c4c4" stroke-width="0.07" textLength="19.00" lengthAdjust="spacingAndGlyphs">Campioni</text>
<g fill="#a8a8a8"><rect x="742" y="45.75" width="3.6" height="0.5"/><rect x="742" y="46.80" width="3.6" height="0.5"/><rect x="742" y="47.85" width="3.6" height="0.5"/></g>
<g clip-path="url(#navclip)"><g transform="translate(662.5,54.5) scale(0.2719) translate(-230,-69)">
<rect x="230.00" y="69.00" width="217.00" height="470.00" fill="#030303"/>
<rect x="230.00" y="69.00" width="217.00" height="51.00" fill="#141414"/>
<text x="245.60" y="85.10" font-size="9.2" fill="#f4f4f4" textLength="23.00" lengthAdjust="spacingAndGlyphs" font-weight="bold">21:04</text>
<g fill="#fff"><rect x="400" y="83.1" width="1.7" height="1.9" rx="0.3"/><rect x="403.1" y="81.5" width="1.6" height="3.5" rx="0.3"/></g>
<g fill="#555"><rect x="406" y="80.2" width="1.4" height="4.8" rx="0.3"/><rect x="408.7" y="78.9" width="1.5" height="6.1" rx="0.3"/></g>
<g fill="none" stroke="#fff" stroke-width="1"><path d="M412.9,80.4 A6.2,6.2 0 0 1 421.9,80.4"/><path d="M414.5,82.2 A3.8,3.8 0 0 1 420.3,82.2"/></g><circle cx="417.4" cy="84.2" r="1" fill="#fff"/>
<rect x="424.7" y="78.8" width="13.6" height="7" rx="1.8" fill="none" stroke="#555" stroke-width="0.6"/><rect x="426.2" y="80.2" width="10" height="3.9" rx="0.6" fill="#fff"/><rect x="438.6" y="81.3" width="0.8" height="2" fill="#555"/>
<text x="239.30" y="110.80" font-size="10.5" fill="#3a7fe4" stroke="#3a7fe4" stroke-width="0.45" textLength="19.00" lengthAdjust="spacingAndGlyphs">Fine</text>
<text x="326.00" y="111.20" font-size="10" fill="#f0f0f0" textLength="25.00" lengthAdjust="spacingAndGlyphs" font-weight="bold">5 di 5</text>
<g fill="#3a7fe4"><rect x="424.2" y="102.6" width="1.4" height="1.3"/><rect x="426.6" y="102.6" width="10.1" height="1.1"/><rect x="424.2" y="106.4" width="1.4" height="1.3"/><rect x="426.6" y="106.4" width="10.1" height="1.1"/><rect x="424.2" y="110.2" width="1.4" height="1.3"/><rect x="426.6" y="110.2" width="10.1" height="1.1"/></g>
<use href="#memoji"/>
<rect x="318.00" y="532.00" width="45.00" height="2.00" fill="#dcdcdc" rx="1"/>
</g></g>
<rect x="662.70" y="54.70" width="58.80" height="123.00" fill="none" stroke="#c62828" stroke-width="0.9"/>
<rect x="638.00" y="185.00" width="21.50" height="7.80" fill="#474747"/>
<text x="639.60" y="190.50" font-size="4.6" fill="#cfcfcf" stroke="#cfcfcf" stroke-width="0.07" textLength="8.60" lengthAdjust="spacingAndGlyphs">100%</text>
<rect x="672.00" y="187.80" width="55.00" height="0.60" fill="#3a3a3a"/>
<path d="M697.6,191.3 L699.4,188.3 L701.2,191.3 Z" fill="#e8e8e8"/>
<path d="M662.6,189.6 L664.6,187.9 L666.6,189.6 Z" fill="#cfcfcf"/>
<path d="M731.6,190 L734,186.8 L736.2,188.4 L738.4,190 Z" fill="#dedede"/>
<rect x="638.00" y="192.80" width="110.00" height="1.90" fill="#3e3e3e"/>
<rect x="638.00" y="194.70" width="110.00" height="10.30" fill="#474747"/>
<rect x="638.00" y="194.70" width="18.00" height="10.30" fill="#535353"/>
<text x="640.80" y="201.55" font-size="5" fill="#f0f0f0" stroke="#f0f0f0" stroke-width="0.07" textLength="11.70" lengthAdjust="spacingAndGlyphs" font-weight="bold">Storia</text>
<rect x="675.50" y="194.70" width="0.50" height="10.30" fill="#3c3c3c"/>
<text x="659.30" y="201.55" font-size="5" fill="#c4c4c4" stroke="#c4c4c4" stroke-width="0.07" textLength="12.40" lengthAdjust="spacingAndGlyphs">Azioni</text>
<rect x="700.50" y="194.70" width="0.50" height="10.30" fill="#3c3c3c"/>
<text x="679.80" y="201.55" font-size="5" fill="#c4c4c4" stroke="#c4c4c4" stroke-width="0.07" textLength="18.40" lengthAdjust="spacingAndGlyphs">Proprietà</text>
<g fill="#a8a8a8"><rect x="742" y="198.55" width="3.6" height="0.5"/><rect x="742" y="199.60" width="3.6" height="0.5"/><rect x="742" y="200.65" width="3.6" height="0.5"/></g>
<rect x="638.00" y="207.50" width="110.00" height="69.00" fill="#4f4f4f"/>
<path d="M641,217 L645,213 M641.5,213.5 L643,215" stroke="#d8d8d8" stroke-width="0.8"/>
<rect x="648.00" y="211.00" width="5.20" height="6.20" fill="#0a0a0a"/>
<circle cx="650.6" cy="214" r="0.9" fill="#b08a70"/>
<text x="655.00" y="216.00" font-size="4.8" fill="#d6d6d6" stroke="#d6d6d6" stroke-width="0.07" textLength="27.00" lengthAdjust="spacingAndGlyphs">IMG_5071.PNG</text>
<rect x="638.00" y="222.00" width="104.00" height="0.50" fill="#4a4a4a"/>
<rect x="638.00" y="231.40" width="104.00" height="0.40" fill="#4b4b4b"/>
<rect x="640.50" y="225.00" width="3.60" height="3.60" fill="none" stroke="#5f5f5f" stroke-width="0.5"/>
<path d="M650.3,224.20 L654.4,224.20 L655.8,225.60 L655.8,229.80 L650.3,229.80 Z" fill="#b4b4b4"/>
<text x="659.80" y="228.70" font-size="4.8" fill="#cfcfcf" textLength="8.30" lengthAdjust="spacingAndGlyphs">Apri</text>
<rect x="638.00" y="240.25" width="104.00" height="0.40" fill="#4b4b4b"/>
<rect x="640.50" y="233.85" width="3.60" height="3.60" fill="none" stroke="#5f5f5f" stroke-width="0.5"/>
<rect x="650.00" y="233.25" width="6.00" height="5.20" fill="none" stroke="#b0b0b0" stroke-width="0.6" stroke-dasharray="1 0.9"/>
<text x="659.80" y="237.55" font-size="4.8" fill="#cfcfcf" textLength="41.50" lengthAdjust="spacingAndGlyphs">Selezione rettangolare</text>
<rect x="638.00" y="249.10" width="104.00" height="0.40" fill="#4b4b4b"/>
<rect x="640.50" y="242.70" width="3.60" height="3.60" fill="none" stroke="#5f5f5f" stroke-width="0.5"/>
<path d="M650.3,241.90 L654.4,241.90 L655.8,243.30 L655.8,247.50 L650.3,247.50 Z" fill="#b4b4b4"/>
<text x="659.80" y="246.40" font-size="4.8" fill="#cfcfcf" textLength="22.00" lengthAdjust="spacingAndGlyphs">Deseleziona</text>
<rect x="638.00" y="257.95" width="104.00" height="0.40" fill="#4b4b4b"/>
<rect x="640.50" y="251.55" width="3.60" height="3.60" fill="none" stroke="#5f5f5f" stroke-width="0.5"/>
<rect x="650.00" y="250.95" width="6.00" height="5.20" fill="none" stroke="#b0b0b0" stroke-width="0.6" stroke-dasharray="1 0.9"/>
<text x="659.80" y="255.25" font-size="4.8" fill="#cfcfcf" textLength="41.50" lengthAdjust="spacingAndGlyphs">Selezione rettangolare</text>
<rect x="638.00" y="266.80" width="104.00" height="0.40" fill="#4b4b4b"/>
<rect x="640.50" y="260.40" width="3.60" height="3.60" fill="none" stroke="#5f5f5f" stroke-width="0.5"/>
<path d="M650.3,259.60 L654.4,259.60 L655.8,261.00 L655.8,265.20 L650.3,265.20 Z" fill="#b4b4b4"/>
<text x="659.80" y="264.10" font-size="4.8" fill="#cfcfcf" textLength="22.00" lengthAdjust="spacingAndGlyphs">Deseleziona</text>
<rect x="638.00" y="266.85" width="104.00" height="8.80" fill="#6a6a6a"/>
<rect x="638.00" y="275.65" width="104.00" height="0.40" fill="#4b4b4b"/>
<rect x="640.50" y="269.25" width="3.60" height="3.60" fill="none" stroke="#5f5f5f" stroke-width="0.5"/>
<rect x="650.00" y="268.65" width="6.00" height="5.20" fill="none" stroke="#b0b0b0" stroke-width="0.6" stroke-dasharray="1 0.9"/>
<text x="659.80" y="272.95" font-size="4.8" fill="#e6e6e6" textLength="41.50" lengthAdjust="spacingAndGlyphs">Selezione rettangolare</text>
<rect x="742.00" y="207.50" width="6.00" height="69.00" fill="#4b4b4b"/>
<g fill="#d0d0d0"><path d="M708.8,282.4 L711.8,282.4 L711.8,286 L708.2,286 Z"/><rect x="721.2" y="282.2" width="4.6" height="3.6" rx="0.6"/><rect x="732.6" y="282" width="3.4" height="4.2"/></g>
<circle cx="723.5" cy="284" r="1" fill="#535353"/>
<rect x="638.00" y="288.80" width="110.00" height="1.60" fill="#3e3e3e"/>
<rect x="638.00" y="290.40" width="110.00" height="10.20" fill="#474747"/>
<rect x="638.50" y="290.40" width="17.80" height="10.20" fill="#535353"/>
<text x="641.00" y="297.20" font-size="5" fill="#f0f0f0" stroke="#f0f0f0" stroke-width="0.07" textLength="11.30" lengthAdjust="spacingAndGlyphs" font-weight="bold">Livelli</text>
<rect x="675.50" y="290.40" width="0.50" height="10.20" fill="#3c3c3c"/>
<text x="659.50" y="297.20" font-size="5" fill="#c4c4c4" stroke="#c4c4c4" stroke-width="0.07" textLength="12.30" lengthAdjust="spacingAndGlyphs">Canali</text>
<rect x="700.00" y="290.40" width="0.50" height="10.20" fill="#3c3c3c"/>
<text x="679.70" y="297.20" font-size="5" fill="#c4c4c4" stroke="#c4c4c4" stroke-width="0.07" textLength="17.80" lengthAdjust="spacingAndGlyphs">Tracciati</text>
<g fill="#a8a8a8"><rect x="742" y="294.20" width="3.6" height="0.5"/><rect x="742" y="295.25" width="3.6" height="0.5"/><rect x="742" y="296.30" width="3.6" height="0.5"/></g>
<rect x="639.40" y="304.80" width="41.60" height="6.50" fill="#464646" rx="0.6"/>
<circle cx="642.6" cy="307.6" r="1.3" fill="none" stroke="#d0d0d0" stroke-width="0.5"/>
<text x="645.00" y="310.00" font-size="4.8" fill="#d6d6d6" stroke="#d6d6d6" stroke-width="0.07" textLength="8.00" lengthAdjust="spacingAndGlyphs">Tipo</text>
<path d="M677.30,307.54 L678.40,308.86 L679.50,307.54" stroke="#c4c4c4" stroke-width="0.6" fill="none"/>
<rect x="691.60" y="306.20" width="4.20" height="3.60" fill="none" stroke="#d4d4d4" stroke-width="0.6"/>
<path d="M692,309.6 L693.4,307.9 L694.6,309 L695.4,308.2 L695.4,309.6 Z" fill="#d4d4d4"/>
<circle cx="702.7" cy="308" r="2" fill="#d4d4d4"/><path d="M701.3,309.4 L704.1,306.6" stroke="#535353" stroke-width="0.8"/>
<path d="M709.8,306.2 L713.8,306.2 M711.8,306.2 L711.8,310" stroke="#d4d4d4" stroke-width="0.8"/>
<g fill="#d4d4d4"><rect x="719.4" y="306" width="1.4" height="1.4"/><rect x="721.8" y="306" width="1.4" height="1.4"/><rect x="719.4" y="308.6" width="1.4" height="1.4"/><rect x="721.8" y="308.6" width="1.4" height="1.4"/></g>
<path d="M728.8,306 L731.8,306 L732.8,307 L732.8,310.2 L728.8,310.2 Z" fill="none" stroke="#d4d4d4" stroke-width="0.6"/><rect x="729.8" y="307.8" width="2" height="1.6" fill="#d4d4d4"/>
<circle cx="744.2" cy="306" r="1.2" fill="#e0e0e0"/><rect x="743.6" y="307.2" width="1.2" height="4" fill="#666"/>
<rect x="639.40" y="316.00" width="68.60" height="6.30" fill="#464646" rx="0.6"/>
<text x="641.60" y="320.90" font-size="4.8" fill="#d6d6d6" stroke="#d6d6d6" stroke-width="0.07" textLength="15.60" lengthAdjust="spacingAndGlyphs">Normale</text>
<path d="M704.50,318.84 L705.60,320.16 L706.70,318.84" stroke="#c4c4c4" stroke-width="0.6" fill="none"/>
<text x="710.20" y="320.90" font-size="4.8" fill="#c8c8c8" stroke="#c8c8c8" stroke-width="0.07" textLength="14.80" lengthAdjust="spacingAndGlyphs">Opacità:</text>
<rect x="727.00" y="316.00" width="12.50" height="6.30" fill="#464646"/>
<text x="728.20" y="320.90" font-size="4.6" fill="#d6d6d6" stroke="#d6d6d6" stroke-width="0.07" textLength="9.40" lengthAdjust="spacingAndGlyphs">100%</text>
<rect x="741.00" y="316.00" width="4.40" height="6.30" fill="#464646"/>
<path d="M742.10,318.64 L743.20,319.96 L744.30,318.64" stroke="#c4c4c4" stroke-width="0.6" fill="none"/>
<text x="639.40" y="331.60" font-size="4.8" fill="#c8c8c8" stroke="#c8c8c8" stroke-width="0.07" textLength="10.60" lengthAdjust="spacingAndGlyphs">Bloc.:</text>
<g fill="#d8d8d8"><rect x="652.4" y="327.8" width="1.3" height="1.3"/><rect x="655" y="327.8" width="1.3" height="1.3"/><rect x="653.7" y="329.1" width="1.3" height="1.3"/><rect x="652.4" y="330.4" width="1.3" height="1.3"/><rect x="655" y="330.4" width="1.3" height="1.3"/></g><rect x="652.4" y="327.8" width="3.9" height="3.9" fill="none" stroke="#d8d8d8" stroke-width="0.4"/>
<path d="M661.2,332.8 L662.2,331.8" stroke="#dadada" stroke-width="1.3" stroke-linecap="round"/><path d="M662.4,331.6 L665.2,327.6" stroke="#dadada" stroke-width="0.8"/>
<g fill="none" stroke="#d0d0d0" stroke-width="0.6"><path d="M671.3,327.4 L671.3,333 M668.5,330.2 L674.1,330.2"/><path d="M678,328.6 L682.4,328.6 M678,331.6 L682.4,331.6 M679,327.6 L679,332.6 M681.4,327.6 L681.4,332.6"/></g>
<rect x="686.8" y="329.6" width="3.6" height="3.2" fill="#d0d0d0"/><path d="M687.5,329.8 L687.5,328.4 A1.1,1.1 0 0 1 689.7,328.4 L689.7,329.8" stroke="#d0d0d0" stroke-width="0.6" fill="none"/>
<text x="711.50" y="331.60" font-size="4.8" fill="#c8c8c8" stroke="#c8c8c8" stroke-width="0.07" textLength="13.50" lengthAdjust="spacingAndGlyphs">Riemp.:</text>
<rect x="727.00" y="327.00" width="12.50" height="6.30" fill="#464646"/>
<text x="728.20" y="331.90" font-size="4.6" fill="#d6d6d6" stroke="#d6d6d6" stroke-width="0.07" textLength="9.40" lengthAdjust="spacingAndGlyphs">100%</text>
<rect x="741.00" y="327.00" width="4.40" height="6.30" fill="#464646"/>
<path d="M742.10,329.64 L743.20,330.96 L744.30,329.64" stroke="#c4c4c4" stroke-width="0.6" fill="none"/>
<rect x="638.00" y="335.50" width="110.00" height="95.50" fill="#4f4f4f"/>
<rect x="649.60" y="336.20" width="92.40" height="15.10" fill="#6a6a6a"/>
<path d="M640.8,343.7 Q643.2,341 645.6,343.7 Q643.2,346.4 640.8,343.7 Z" fill="none" stroke="#d8d8d8" stroke-width="0.6"/><circle cx="643.2" cy="343.7" r="0.8" fill="#d8d8d8"/>
<rect x="650.00" y="336.70" width="7.70" height="14.10" fill="#d8d8d8"/>
<rect x="650.60" y="337.30" width="6.50" height="12.90" fill="#050505"/>
<circle cx="653.6" cy="342.8" r="0.9" fill="#b08068"/>
<text x="659.70" y="345.70" font-size="4.8" fill="#e6e6e6" stroke="#e6e6e6" stroke-width="0.07" textLength="16.00" lengthAdjust="spacingAndGlyphs">Livello 1</text>
<rect x="742.00" y="335.50" width="6.00" height="95.50" fill="#4b4b4b"/>
<path d="M670.6,436.3 a1.2,1.2 0 0 1 0,-2.4 h1.2 M673.4,433.9 h1.2 a1.2,1.2 0 0 1 0,2.4 h-1.2 M670.6,436.3 h1.2" stroke="#777" stroke-width="0.6" fill="none"/>
<text x="680.60" y="438.00" font-size="5" fill="#d0d0d0" stroke="#d0d0d0" stroke-width="0.07" textLength="4.40" lengthAdjust="spacingAndGlyphs" font-style="italic">fx</text>
<rect x="684.20" y="438.20" width="0.80" height="0.80" fill="#d0d0d0"/>
<rect x="690.80" y="434.30" width="4.40" height="3.60" fill="#d0d0d0" rx="0.4"/>
<circle cx="693" cy="436.1" r="1.1" fill="#535353"/>
<circle cx="703.8" cy="436" r="2" fill="none" stroke="#d0d0d0" stroke-width="0.6"/><path d="M703.8,434 A2,2 0 0 1 703.8,438 Z" fill="#d0d0d0"/><rect x="705.3" y="437.6" width="0.8" height="0.8" fill="#d0d0d0"/>
<path d="M711.6,434.6 L713.4,434.6 L714,435.2 L716.4,435.2 L716.4,438 L711.6,438 Z" fill="#d0d0d0"/>
<path d="M722.2,434 L726.4,434 L726.4,438.2 L722.2,438.2 Z" fill="none" stroke="#d0d0d0" stroke-width="0.6"/><path d="M722.2,434 L724,434 L722.2,435.8 Z" fill="#d0d0d0"/>
<path d="M733.4,434.8 L736.6,434.8 L736.2,438.4 L733.8,438.4 Z" fill="#8a8a8a"/><rect x="733" y="434" width="4" height="0.6" fill="#8a8a8a"/>
<rect x="638.00" y="441.20" width="110.00" height="1.80" fill="#3e3e3e"/>
<rect x="638.00" y="443.00" width="110.00" height="9.90" fill="#474747"/>
<rect x="638.00" y="443.00" width="24.70" height="9.90" fill="#535353"/>
<text x="640.60" y="449.65" font-size="5" fill="#f0f0f0" stroke="#f0f0f0" stroke-width="0.07" textLength="18.80" lengthAdjust="spacingAndGlyphs" font-weight="bold">Carattere</text>
<rect x="688.50" y="443.00" width="0.50" height="9.90" fill="#3c3c3c"/>
<text x="666.00" y="449.65" font-size="5" fill="#c4c4c4" stroke="#c4c4c4" stroke-width="0.07" textLength="19.20" lengthAdjust="spacingAndGlyphs">Paragrafo</text>
<g fill="#a8a8a8"><rect x="742" y="446.65" width="3.6" height="0.5"/><rect x="742" y="447.70" width="3.6" height="0.5"/><rect x="742" y="448.75" width="3.6" height="0.5"/></g>
<rect x="639.70" y="459.40" width="46.60" height="6.00" fill="#464646" rx="0.5"/>
<text x="641.50" y="464.20" font-size="4.7" fill="#d4d4d4" stroke="#d4d4d4" stroke-width="0.07" textLength="27.00" lengthAdjust="spacingAndGlyphs">SF Pro Display</text>
<rect x="680.30" y="459.40" width="0.50" height="6.00" fill="#3d3d3d"/>
<path d="M682.20,461.74 L683.30,463.06 L684.40,461.74" stroke="#c4c4c4" stroke-width="0.6" fill="none"/>
<rect x="691.00" y="459.40" width="31.00" height="6.00" fill="#464646" rx="0.5"/>
<text x="692.80" y="464.20" font-size="4.7" fill="#d4d4d4" stroke="#d4d4d4" stroke-width="0.07" textLength="11.00" lengthAdjust="spacingAndGlyphs">Heavy</text>
<rect x="716.00" y="459.40" width="0.50" height="6.00" fill="#3d3d3d"/>
<path d="M717.90,461.74 L719.00,463.06 L720.10,461.74" stroke="#c4c4c4" stroke-width="0.6" fill="none"/>
<text x="641.40" y="474.80" font-size="7.4" fill="#d8d8d8" stroke="#d8d8d8" stroke-width="0.07" font-family="Liberation Serif">T</text>
<text x="639.60" y="474.80" font-size="3.4" fill="#d0d0d0" stroke="#d0d0d0" stroke-width="0.07" font-family="Liberation Serif">T</text>
<rect x="648.00" y="468.80" width="30.00" height="5.80" fill="#464646" rx="0.5"/>
<text x="649.80" y="473.40" font-size="4.7" fill="#d4d4d4" stroke="#d4d4d4" stroke-width="0.07" textLength="11.00" lengthAdjust="spacingAndGlyphs">100 pt</text>
<rect x="672.00" y="468.80" width="0.50" height="5.80" fill="#3d3d3d"/>
<path d="M673.90,471.04 L675.00,472.36 L676.10,471.04" stroke="#c4c4c4" stroke-width="0.6" fill="none"/>
<text x="685.40" y="473.40" font-size="4.6" fill="#d0d0d0" stroke="#d0d0d0" stroke-width="0.07" textLength="3.60" lengthAdjust="spacingAndGlyphs">A</text>
<path d="M684.6,474.2 L690.6,474.2 M687.5,467.8 L687.5,469.2" stroke="#d0d0d0" stroke-width="0.5"/>
<rect x="693.50" y="468.80" width="28.50" height="5.80" fill="#464646" rx="0.5"/>
<text x="695.30" y="473.40" font-size="4.7" fill="#d4d4d4" stroke="#d4d4d4" stroke-width="0.07" textLength="11.50" lengthAdjust="spacingAndGlyphs">(Auto)</text>
<rect x="716.00" y="468.80" width="0.50" height="5.80" fill="#3d3d3d"/>
<path d="M717.90,471.04 L719.00,472.36 L720.10,471.04" stroke="#c4c4c4" stroke-width="0.6" fill="none"/>
<text x="639.80" y="481.60" font-size="4.6" fill="#d0d0d0" stroke="#d0d0d0" stroke-width="0.07" textLength="6.40" lengthAdjust="spacingAndGlyphs">VA</text>
<rect x="640.60" y="482.60" width="5.00" height="0.40" fill="#d0d0d0"/>
<rect x="648.00" y="477.00" width="30.00" height="5.80" fill="#464646" rx="0.5"/>
<text x="649.80" y="481.60" font-size="4.7" fill="#d4d4d4" stroke="#d4d4d4" stroke-width="0.07" textLength="13.50" lengthAdjust="spacingAndGlyphs">Metrica</text>
<rect x="672.00" y="477.00" width="0.50" height="5.80" fill="#3d3d3d"/>
<path d="M673.90,479.24 L675.00,480.56 L676.10,479.24" stroke="#c4c4c4" stroke-width="0.6" fill="none"/>
<rect x="685.00" y="477.20" width="5.80" height="3.40" fill="none" stroke="#d0d0d0" stroke-width="0.6"/>
<path d="M685,482.4 L690.8,482.4" stroke="#d0d0d0" stroke-width="0.5"/>
<rect x="693.50" y="477.00" width="28.50" height="5.80" fill="#464646" rx="0.5"/>
<text x="695.30" y="481.60" font-size="4.7" fill="#d4d4d4" stroke="#d4d4d4" stroke-width="0.07" textLength="2.40" lengthAdjust="spacingAndGlyphs">0</text>
<rect x="716.00" y="477.00" width="0.50" height="5.80" fill="#3d3d3d"/>
<path d="M717.90,479.24 L719.00,480.56 L720.10,479.24" stroke="#c4c4c4" stroke-width="0.6" fill="none"/>
<text x="641.40" y="490.80" font-size="7.4" fill="#d8d8d8" stroke="#d8d8d8" stroke-width="0.07" font-family="Liberation Serif">T</text>
<path d="M640,485.6 L640,490.2" stroke="#d0d0d0" stroke-width="0.5"/>
<rect x="648.00" y="485.00" width="20.00" height="5.60" fill="#464646"/>
<text x="649.80" y="489.40" font-size="4.7" fill="#d4d4d4" stroke="#d4d4d4" stroke-width="0.07" textLength="9.00" lengthAdjust="spacingAndGlyphs">100%</text>
<text x="694.00" y="490.20" font-size="7" fill="#d8d8d8" stroke="#d8d8d8" stroke-width="0.07" font-family="Liberation Serif">T</text>
<rect x="693.60" y="490.80" width="6.20" height="0.50" fill="#d0d0d0"/>
<rect x="701.00" y="485.00" width="21.00" height="5.60" fill="#464646"/>
<text x="702.80" y="489.40" font-size="4.7" fill="#d4d4d4" stroke="#d4d4d4" stroke-width="0.07" textLength="9.00" lengthAdjust="spacingAndGlyphs">100%</text>
<text x="639.80" y="497.60" font-size="4.4" fill="#d0d0d0" stroke="#d0d0d0" stroke-width="0.07" textLength="5.80" lengthAdjust="spacingAndGlyphs">Aa</text>
<path d="M646,493.6 L646,499" stroke="#d0d0d0" stroke-width="0.4"/>
<rect x="648.00" y="493.00" width="20.00" height="5.80" fill="#464646"/>
<text x="649.80" y="497.60" font-size="4.7" fill="#d4d4d4" stroke="#d4d4d4" stroke-width="0.07" textLength="7.00" lengthAdjust="spacingAndGlyphs">0 pt</text>
<text x="686.00" y="497.80" font-size="4.7" fill="#c8c8c8" stroke="#c8c8c8" stroke-width="0.07" textLength="12.80" lengthAdjust="spacingAndGlyphs">Colore:</text>
<rect x="701.00" y="492.30" width="21.30" height="7.20" fill="#050505"/>
<rect x="701.00" y="492.30" width="21.30" height="7.20" fill="none" stroke="#3a3a3a" stroke-width="0.4"/>
<text x="646.80" y="506.70" font-size="5.2" fill="#d0d0d0" stroke="#d0d0d0" stroke-width="0.07" textLength="3.00" lengthAdjust="spacingAndGlyphs" font-weight="bold">T</text>
<text x="656.10" y="506.70" font-size="5.2" fill="#d0d0d0" stroke="#d0d0d0" stroke-width="0.07" textLength="3.00" lengthAdjust="spacingAndGlyphs">T</text>
<text x="664.20" y="506.70" font-size="5.2" fill="#d0d0d0" stroke="#d0d0d0" stroke-width="0.07" textLength="4.40" lengthAdjust="spacingAndGlyphs">TT</text>
<text x="673.80" y="506.70" font-size="5.2" fill="#d0d0d0" stroke="#d0d0d0" stroke-width="0.07" textLength="4.40" lengthAdjust="spacingAndGlyphs">Tт</text>
<text x="683.10" y="506.70" font-size="5.2" fill="#d0d0d0" stroke="#d0d0d0" stroke-width="0.07" textLength="4.40" lengthAdjust="spacingAndGlyphs">T¹</text>
<text x="692.30" y="506.70" font-size="5.2" fill="#d0d0d0" stroke="#d0d0d0" stroke-width="0.07" textLength="4.40" lengthAdjust="spacingAndGlyphs">T₁</text>
<text x="702.30" y="506.70" font-size="5.2" fill="#d0d0d0" stroke="#d0d0d0" stroke-width="0.07" textLength="3.00" lengthAdjust="spacingAndGlyphs">T</text>
<text x="711.50" y="506.70" font-size="5.2" fill="#d0d0d0" stroke="#d0d0d0" stroke-width="0.07" textLength="3.00" lengthAdjust="spacingAndGlyphs">Ŧ</text>
<rect x="645.30" y="511.80" width="7.00" height="7.20" fill="#3a3a3a"/>
<rect x="654.60" y="511.80" width="7.00" height="7.20" fill="#3a3a3a"/>
<text x="646.60" y="517.60" font-size="5.6" fill="#e0e0e0" stroke="#e0e0e0" stroke-width="0.07" textLength="4.40" lengthAdjust="spacingAndGlyphs">fi</text>
<text x="655.60" y="517.40" font-size="4.6" fill="#c8c8c8" stroke="#c8c8c8" stroke-width="0.07" textLength="4.60" lengthAdjust="spacingAndGlyphs">st</text>
<text x="664.20" y="517.40" font-size="5" fill="#8c8c8c" stroke="#8c8c8c" stroke-width="0.07" textLength="4.40" lengthAdjust="spacingAndGlyphs">ad</text>
<text x="673.80" y="517.40" font-size="5" fill="#8c8c8c" stroke="#8c8c8c" stroke-width="0.07" textLength="4.40" lengthAdjust="spacingAndGlyphs">A</text>
<text x="683.10" y="517.40" font-size="5" fill="#8c8c8c" stroke="#8c8c8c" stroke-width="0.07" textLength="4.40" lengthAdjust="spacingAndGlyphs">aa</text>
<text x="692.30" y="517.40" font-size="5" fill="#8c8c8c" stroke="#8c8c8c" stroke-width="0.07" textLength="4.40" lengthAdjust="spacingAndGlyphs">T</text>
<text x="701.60" y="517.40" font-size="5" fill="#8c8c8c" stroke="#8c8c8c" stroke-width="0.07" textLength="4.40" lengthAdjust="spacingAndGlyphs">1st</text>
<text x="710.80" y="517.40" font-size="5" fill="#8c8c8c" stroke="#8c8c8c" stroke-width="0.07" textLength="4.40" lengthAdjust="spacingAndGlyphs">½</text>
<rect x="639.70" y="523.00" width="46.60" height="6.00" fill="#464646" rx="0.5"/>
<text x="641.50" y="527.80" font-size="4.7" fill="#d4d4d4" stroke="#d4d4d4" stroke-width="0.07" textLength="24.50" lengthAdjust="spacingAndGlyphs">Inglese (USA)</text>
<rect x="680.30" y="523.00" width="0.50" height="6.00" fill="#3d3d3d"/>
<path d="M682.20,525.34 L683.30,526.66 L684.40,525.34" stroke="#c4c4c4" stroke-width="0.6" fill="none"/>
<text x="689.00" y="527.80" font-size="4.6" fill="#c8c8c8" stroke="#c8c8c8" stroke-width="0.07" textLength="5.00" lengthAdjust="spacingAndGlyphs">aa</text>
<rect x="697.00" y="523.00" width="25.00" height="6.00" fill="#464646" rx="0.5"/>
<text x="698.80" y="527.80" font-size="4.7" fill="#d4d4d4" stroke="#d4d4d4" stroke-width="0.07" textLength="13.50" lengthAdjust="spacingAndGlyphs">Preciso</text>
<rect x="716.00" y="523.00" width="0.50" height="6.00" fill="#3d3d3d"/>
<path d="M717.90,525.34 L719.00,526.66 L720.10,525.34" stroke="#c4c4c4" stroke-width="0.6" fill="none"/>
<path d="M34.3,55.70 L34.3,54.30 L32.9,55.70 Z" fill="#bbbbbb"/>
<path d="M34.3,65.70 L34.3,64.30 L32.9,65.70 Z" fill="#bbbbbb"/>
<path d="M34.3,75.70 L34.3,74.30 L32.9,75.70 Z" fill="#bbbbbb"/>
<path d="M34.3,85.70 L34.3,84.30 L32.9,85.70 Z" fill="#bbbbbb"/>
<path d="M34.3,95.70 L34.3,94.30 L32.9,95.70 Z" fill="#bbbbbb"/>
<path d="M34.3,115.70 L34.3,114.30 L32.9,115.70 Z" fill="#bbbbbb"/>
<path d="M34.3,125.70 L34.3,124.30 L32.9,125.70 Z" fill="#bbbbbb"/>
<path d="M34.3,135.70 L34.3,134.30 L32.9,135.70 Z" fill="#bbbbbb"/>
<path d="M34.3,145.70 L34.3,144.30 L32.9,145.70 Z" fill="#bbbbbb"/>
<path d="M34.3,155.70 L34.3,154.30 L32.9,155.70 Z" fill="#bbbbbb"/>
<path d="M34.3,165.70 L34.3,164.30 L32.9,165.70 Z" fill="#bbbbbb"/>
<path d="M34.3,175.70 L34.3,174.30 L32.9,175.70 Z" fill="#bbbbbb"/>
<path d="M34.3,185.70 L34.3,184.30 L32.9,185.70 Z" fill="#bbbbbb"/>
<path d="M34.3,195.70 L34.3,194.30 L32.9,195.70 Z" fill="#bbbbbb"/>
<path d="M34.3,205.70 L34.3,204.30 L32.9,205.70 Z" fill="#bbbbbb"/>
<path d="M34.3,215.70 L34.3,214.30 L32.9,215.70 Z" fill="#bbbbbb"/>
<path d="M34.3,225.70 L34.3,224.30 L32.9,225.70 Z" fill="#bbbbbb"/>
<path d="M34.3,235.70 L34.3,234.30 L32.9,235.70 Z" fill="#bbbbbb"/>
<path d="M34.3,245.70 L34.3,244.30 L32.9,245.70 Z" fill="#bbbbbb"/>
<path d="M34.3,255.70 L34.3,254.30 L32.9,255.70 Z" fill="#bbbbbb"/>
<path d="M34.3,265.70 L34.3,264.30 L32.9,265.70 Z" fill="#bbbbbb"/>
<g fill="#dedede"><rect x="28.65" y="49.5" width="0.7" height="6"/><rect x="26" y="52.15" width="6" height="0.7"/><path d="M29,48.9 L27.9,50.2 L30.1,50.2Z M29,56.1 L27.9,54.8 L30.1,54.8Z M25.4,52.5 L26.7,51.4 L26.7,53.6Z M32.6,52.5 L31.3,51.4 L31.3,53.6Z"/></g><rect x="26" y="60.0" width="6" height="5" fill="none" stroke="#dedede" stroke-width="1" stroke-dasharray="1.1 1"/><path d="M26,70.5 L28,73.5 L32,70.0 M27,75.0 L31,73.5" stroke="#dedede" stroke-width="1" fill="none"/><path d="M26,85.5 L31,80.5" stroke="#dedede" stroke-width="1.2"/><path d="M31.5,79.0 l0.6,1 l1,0.3 l-1,0.4 l-0.5,1 l-0.4,-1 l-1,-0.3 l1,-0.4 Z" fill="#dedede"/><path d="M27,89.0 L27,94.5 L32.5,94.5 M25.5,90.5 L31,90.5 L31,96.0" stroke="#dedede" stroke-width="1" fill="none"/><rect x="26" y="99.7" width="6" height="5.6" fill="none" stroke="#dedede" stroke-width="0.9"/><path d="M26,99.7 L32,105.3 M32,99.7 L26,105.3" stroke="#dedede" stroke-width="0.5"/><path d="M26,115.5 L30.5,111.0" stroke="#dedede" stroke-width="1.3"/><circle cx="31.3" cy="110.2" r="1.3" fill="#dedede"/><path d="M26.5,125.0 L31.5,120.0" stroke="#dedede" stroke-width="2.8" stroke-linecap="round"/><path d="M26,135.7 L27.5,134.0" stroke="#dedede" stroke-width="1.5" stroke-linecap="round"/><path d="M27.8,133.7 L32,129.3" stroke="#dedede" stroke-width="1"/><circle cx="29" cy="140.5" r="1.5" fill="#dedede"/><rect x="28.4" y="141.5" width="1.2" height="2" fill="#dedede"/><rect x="26" y="143.5" width="6" height="1.5" fill="#dedede"/><rect x="26.4" y="145.3" width="5.2" height="0.6" fill="#dedede"/><path d="M26.5,155.5 L32,149.7" stroke="#dedede" stroke-width="1"/><path d="M26,150.5 L28,151.5" stroke="#dedede" stroke-width="0.9"/><path d="M26,163.5 L29,160.0 L32,162.5 L29,165.5 Z" fill="#dedede"/><defs><linearGradient id="tg" x1="0" x2="1"><stop offset="0" stop-color="#f0f0f0"/><stop offset="1" stop-color="#555"/></linearGradient></defs><rect x="26" y="169.5" width="6" height="6" fill="url(#tg)" stroke="#dedede" stroke-width="0.5"/><path d="M27.5,186.0 L28.5,182.5" stroke="#dedede" stroke-width="1"/><ellipse cx="29.8" cy="181.0" rx="2.4" ry="2" fill="#dedede"/><ellipse cx="29" cy="192.5" rx="2.8" ry="2" fill="#dedede"/><path d="M27,193.5 L32,195.5" stroke="#dedede" stroke-width="1"/><path d="M26,205.5 L27,201.5 L30,199.5 L32,201.5 L30,204.5 Z" fill="#dedede"/><path d="M26.2,209.5 L31.8,209.5 M29,209.5 L29,215.7 M27.8,215.7 L30.2,215.7" stroke="#dedede" stroke-width="0.9" fill="none"/><path d="M27,219.0 L27,225.0 L29,223.5 L31,225.5 L31.5,224.0 L29.8,222.5 L31.5,221.5 Z" fill="#dedede"/><rect x="26" y="229.9" width="6" height="5.2" rx="1" fill="none" stroke="#dedede" stroke-width="1"/><path d="M26.5,242.0 L26.5,240.0 L31.5,239.5 L32,243.5 L30.5,245.5 L27.5,245.5 L26,243.5Z" fill="#dedede"/><circle cx="28.4" cy="251.7" r="2.3" fill="none" stroke="#dedede" stroke-width="1"/><path d="M30,253.5 L32,255.5" stroke="#dedede" stroke-width="1"/><g fill="#dedede"><circle cx="26.7" cy="262.5" r="0.6"/><circle cx="29" cy="262.5" r="0.6"/><circle cx="31.3" cy="262.5" r="0.6"/></g>
<rect x="24" y="271.4" width="2.4" height="2.4" fill="#111" stroke="#ddd" stroke-width="0.4"/><rect x="25.3" y="272.7" width="2.4" height="2.4" fill="#eee"/>
<path d="M31.5,271.5 Q34,271.5 34,274" stroke="#ccc" stroke-width="0.5" fill="none"/>
<rect x="26.90" y="280.70" width="7.50" height="7.20" fill="#ffffff" stroke="#cfcfcf" stroke-width="0.4"/>
<rect x="23.70" y="277.00" width="6.90" height="6.60" fill="#000000" stroke="#cfcfcf" stroke-width="0.5"/>
<rect x="25.60" y="292.50" width="6.80" height="5.00" fill="none" stroke="#cfcfcf" stroke-width="0.9" rx="1"/>
<circle cx="29" cy="295" r="1.3" fill="none" stroke="#cfcfcf" stroke-width="0.5"/>
<rect x="25.80" y="302.50" width="6.00" height="4.00" fill="none" stroke="#cfcfcf" stroke-width="0.6" rx="0.6"/>
<rect x="27.00" y="303.80" width="6.00" height="4.00" fill="none" stroke="#cfcfcf" stroke-width="0.6" rx="0.6"/>
</g>
</svg>
</body></html>
